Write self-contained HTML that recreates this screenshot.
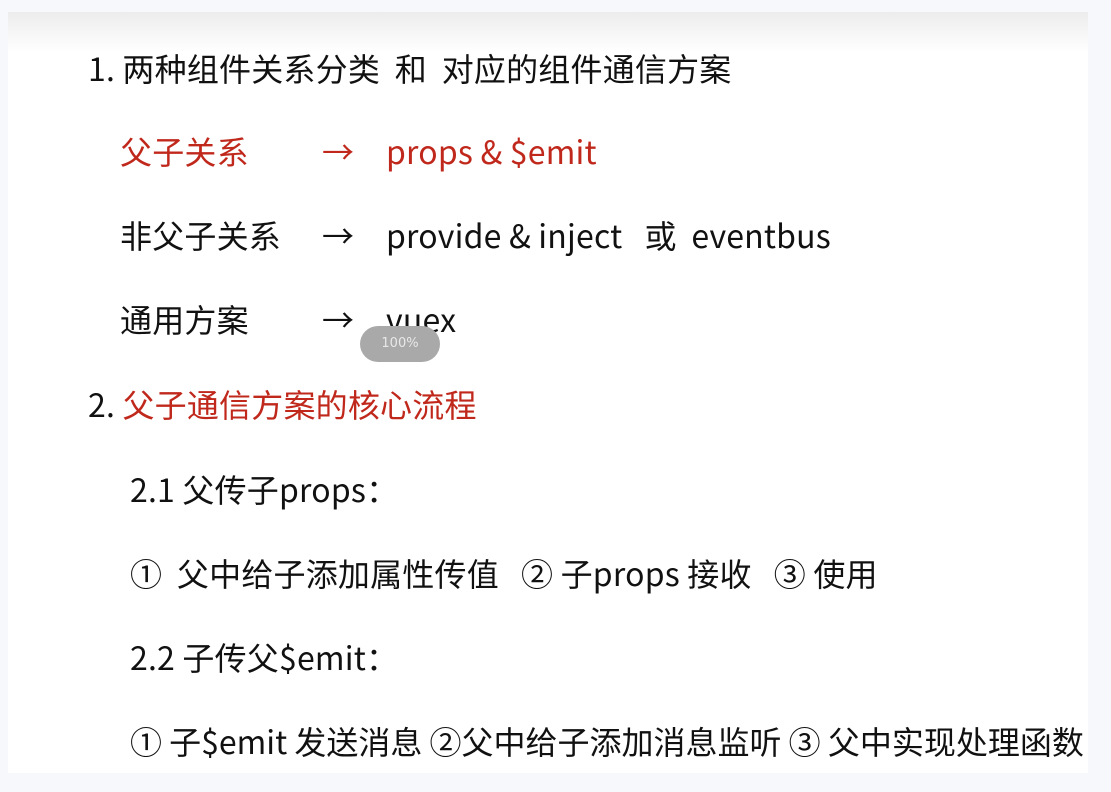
<!DOCTYPE html>
<html><head><meta charset="utf-8"><style>
html,body{margin:0;padding:0;width:1111px;height:792px;background:#f6f8fc;overflow:hidden}
.card{position:absolute;left:8px;top:12px;width:1080px;height:761px;background:#fff}
.grad{position:absolute;left:8px;top:12px;width:1080px;height:40px;background:linear-gradient(#ececec,#fff)}
.t{position:absolute;font-family:"Noto Sans CJK SC","Liberation Sans",sans-serif;font-size:32px;color:#111;white-space:pre;line-height:36px;letter-spacing:0.2px}
.r{color:#c0281c}
.pill{position:absolute;left:360px;top:326px;width:80px;height:36px;border-radius:18px;background:#a9a9a9;color:#e8e8e8;font:13px "DejaVu Sans",sans-serif;text-align:center;line-height:36px}
</style></head><body>
<div class="card"></div><div class="grad"></div>
<div class="t" style="left:88px;top:50px">1. 两种组件关系分类  和  对应的组件通信方案</div>
<div class="t r" style="left:120px;top:133px">父子关系</div>
<div class="t r" style="left:322px;top:133px">→</div>
<div class="t r" style="left:386px;top:133px">props &amp; $emit</div>
<div class="t" style="left:120px;top:217px">非父子关系</div>
<div class="t" style="left:322px;top:217px">→</div>
<div class="t" style="left:386px;top:217px">provide &amp; inject   或  eventbus</div>
<div class="t" style="left:120px;top:301px">通用方案</div>
<div class="t" style="left:322px;top:301px">→</div>
<div class="t" style="left:386px;top:301px">vuex</div>
<div class="pill">100%</div>
<div class="t" style="left:88px;top:386px">2. <span class="r">父子通信方案的核心流程</span></div>
<div class="t" style="left:130px;top:471px">2.1 父传子props：</div>
<div class="t" style="left:130px;top:555px">①  父中给子添加属性传值   ② 子props 接收   ③ 使用</div>
<div class="t" style="left:130px;top:639px">2.2 子传父$emit：</div>
<div class="t" style="left:130px;top:723px;letter-spacing:0">① 子$emit 发送消息 ②父中给子添加消息监听 ③ 父中实现处理函数</div>
</body></html>
